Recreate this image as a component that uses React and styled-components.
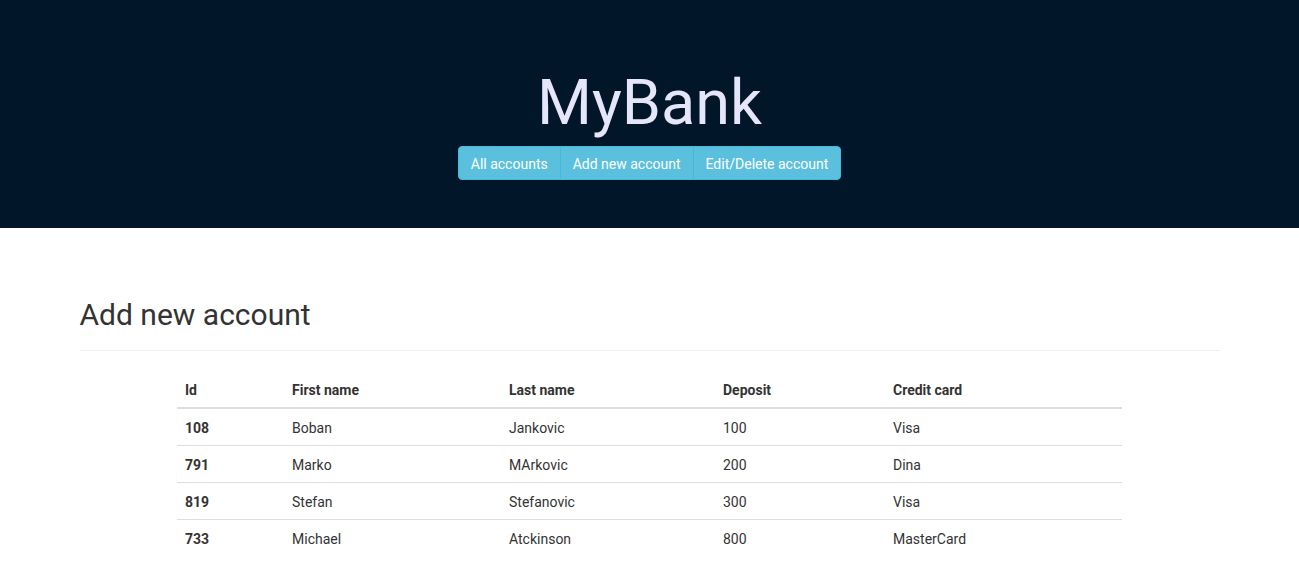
import React from "react";
import styled, { createGlobalStyle } from "styled-components";

const Global = createGlobalStyle`
  * { box-sizing: border-box; }
  body {
    margin: 0;
    font-family: Roboto, "Helvetica Neue", Arial, sans-serif;
    font-size: 14px;
    line-height: 1.42857;
    color: #333;
    background: #fff;
  }
`;

const Jumbotron = styled.header`
  background: #011628;
  padding: 48px 0;
  display: flex;
  flex-direction: column;
  align-items: center;
`;

const Title = styled.h1`
  margin: 20px 0 9px;
  font-size: 63px;
  font-weight: 400;
  line-height: 1.1;
  color: #e6e6fa;
`;

const BtnGroup = styled.nav`
  display: flex;
`;

const Btn = styled.button`
  font-family: inherit;
  font-size: 14px;
  line-height: 20px;
  padding: 7px 12px 5px;
  color: #fff;
  background: #5bc0de;
  border: 1px solid #46b8da;
  margin-left: -1px;
  border-radius: 0;
  cursor: pointer;
  &:first-child { margin-left: 0; border-radius: 4px 0 0 4px; }
  &:last-child { border-radius: 0 4px 4px 0; }
`;

const Container = styled.main`
  width: 1170px;
  margin: 0 auto;
  padding: 0 15px;
  padding-top: 49px;
`;

const Heading = styled.h2`
  margin: 20px 0 10px;
  padding-top: 2px;
  font-size: 30px;
  font-weight: 400;
  line-height: 31px;
  color: #333;
`;

const Rule = styled.hr`
  margin: 20px 0;
  border: 0;
  border-top: 1px solid #eee;
`;

const TableWrap = styled.div`
  width: 945px;
  margin-left: 97.5px;
`;

const Table = styled.table`
  width: 100%;
  border-collapse: collapse;
  border-spacing: 0;
`;

const Th = styled.th`
  text-align: left;
  padding: 9px 8px 7px;
  font-weight: 700;
  line-height: 20px;
  border-bottom: 2px solid #ddd;
  vertical-align: bottom;
  width: ${(p) => p.$w}px;
`;

const Td = styled.td`
  padding: 9px 8px 7px;
  line-height: 20px;
  border-top: 1px solid #ddd;
  font-weight: ${(p) => (p.$bold ? 700 : 400)};
`;

const Row = styled.tr``;

const columns = [
  { label: "Id", w: 107 },
  { label: "First name", w: 217 },
  { label: "Last name", w: 214 },
  { label: "Deposit", w: 170 },
  { label: "Credit card", w: 237 },
];

const rows = [
  ["108", "Boban", "Jankovic", "100", "Visa"],
  ["791", "Marko", "MArkovic", "200", "Dina"],
  ["819", "Stefan", "Stefanovic", "300", "Visa"],
  ["733", "Michael", "Atckinson", "800", "MasterCard"],
];

export default function App() {
  return (
    <>
      <Global />
      <Jumbotron>
        <Title>MyBank</Title>
        <BtnGroup>
          <Btn>All accounts</Btn>
          <Btn>Add new account</Btn>
          <Btn>Edit/Delete account</Btn>
        </BtnGroup>
      </Jumbotron>
      <Container>
        <Heading>Add new account</Heading>
        <Rule />
        <TableWrap>
          <Table>
            <thead>
              <Row>
                {columns.map((c) => (
                  <Th key={c.label} $w={c.w}>{c.label}</Th>
                ))}
              </Row>
            </thead>
            <tbody>
              {rows.map((r) => (
                <Row key={r[0]}>
                  {r.map((v, i) => (
                    <Td key={i} $bold={i === 0}>{v}</Td>
                  ))}
                </Row>
              ))}
            </tbody>
          </Table>
        </TableWrap>
      </Container>
    </>
  );
}
